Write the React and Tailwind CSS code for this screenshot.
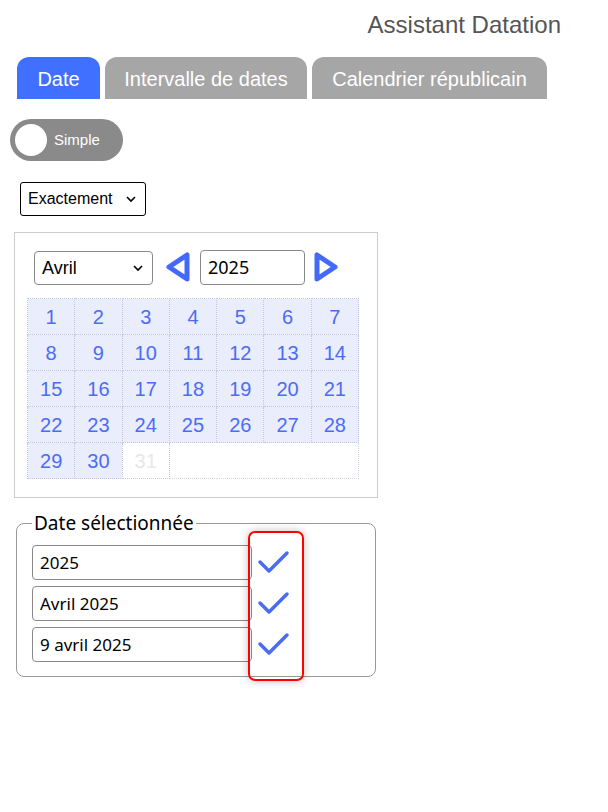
import React, { useState } from 'react';

const months = ['Janvier', 'Février', 'Mars', 'Avril', 'Mai', 'Juin', 'Juillet', 'Août', 'Septembre', 'Octobre', 'Novembre', 'Décembre'];

const Triangle = ({ dir }) => (
  <svg width="28" height="32" viewBox="0 0 28 32" className="shrink-0">
    <polygon
      points={dir === 'left' ? '22,4 22,28 4,16' : '6,4 6,28 24,16'}
      fill="none"
      stroke="#4369fb"
      strokeWidth="5"
      strokeLinejoin="round"
    />
  </svg>
);

const Check = () => (
  <svg width="34" height="30" viewBox="0 0 34 30" className="shrink-0">
    <polyline points="3,14 12,23 30,5" fill="none" stroke="#4a6cf2" strokeWidth="3.5" strokeLinecap="round" strokeLinejoin="round" />
  </svg>
);

const Calendar = () => {
  const rows = [];
  for (let r = 0; r < 4; r++) {
    rows.push([1, 2, 3, 4, 5, 6, 7].map((d) => d + r * 7));
  }
  const cell = 'w-[47px] h-9 border border-dotted border-[#c4c6dc] text-center align-middle';
  return (
    <table className="w-[332px] border-collapse ml-[12px] mt-[13px] font-['Liberation_Sans',sans-serif] text-[20px] text-[#4b6cf6]">
      <tbody>
        {rows.map((row, i) => (
          <tr key={i}>
            {row.map((d) => (
              <td key={d} className={`${cell} bg-[#eaedfc]`}>{d}</td>
            ))}
          </tr>
        ))}
        <tr>
          <td className={`${cell} bg-[#eaedfc]`}>29</td>
          <td className={`${cell} bg-[#eaedfc]`}>30</td>
          <td className={`${cell} text-[#e8e8e8]`}>31</td>
          <td colSpan={4} className="h-9 border border-dotted border-[#d4d6e6]"></td>
        </tr>
      </tbody>
    </table>
  );
};

export default function App() {
  const [tab, setTab] = useState(0);
  const tabs = [
    { label: 'Date', w: 'w-[83px]' },
    { label: 'Intervalle de dates', w: 'w-[202px]' },
    { label: 'Calendrier républicain', w: 'w-[235px]' },
  ];

  return (
    <div className="w-[608px] h-[812px] bg-white font-['Liberation_Sans',Arial,sans-serif] relative">
      <div className="flex justify-end pr-[47px] pt-[11px] text-[24px] text-[#555] leading-[28px]">Assistant Datation</div>

      <div className="flex gap-[5px] pl-[17px] mt-[18px]">
        {tabs.map((t, i) => (
          <button
            key={t.label}
            onClick={() => setTab(i)}
            className={`${t.w} h-[42px] rounded-t-[12px] text-[20px] text-white pt-[2px] ${i === tab ? 'bg-[#4070ff]' : 'bg-[#a6a6a6]'}`}
          >
            {t.label}
          </button>
        ))}
      </div>

      <div className="ml-[10px] mt-[20px] w-[113px] h-[42px] rounded-full bg-[#8a8a8a] flex items-center pl-[5px]">
        <div className="w-8 h-8 rounded-full bg-white" />
        <span className="ml-[7px] text-[15px] text-white">Simple</span>
      </div>

      <div className="ml-[20px] mt-[21px] w-[126px] h-[34px] border border-black rounded-[3px] flex items-center justify-between pl-[7px] pr-[9px] text-[16px] text-black">
        <span>Exactement</span>
        <svg width="10" height="7" viewBox="0 0 10 7"><polyline points="1,1 5,5 9,1" fill="none" stroke="#000" strokeWidth="1.6" /></svg>
      </div>

      <div className="ml-[14px] mt-[16px] w-[364px] h-[266px] border border-[#ccc]">
        <div className="flex items-center mt-[16px] ml-[19px]">
          <div className="w-[119px] h-[34px] border border-[#888] rounded-[4px] flex items-center justify-between pl-[7px] pr-[9px] text-[18px] text-black mt-[2px]">
            <span>{months[3]}</span>
            <svg width="10" height="7" viewBox="0 0 10 7"><polyline points="1,1 5,5 9,1" fill="none" stroke="#000" strokeWidth="1.6" /></svg>
          </div>
          <div className="ml-[12px]"><Triangle dir="left" /></div>
          <div className="ml-[7px] w-[105px] h-[35px] border border-[#888] rounded-[4px] flex items-center pl-[7px] text-[18px] text-black font-['Noto_Sans',sans-serif]">2025</div>
          <div className="ml-[6px]"><Triangle dir="right" /></div>
        </div>
        <Calendar />
      </div>

      <fieldset className="ml-[16px] mt-[13px] w-[360px] h-[166px] border border-[#999] rounded-[8px] pl-[15px] pr-0 pt-[10px]">
        <legend className="ml-[0px] px-[2px] text-[19px] text-black font-['Noto_Sans',sans-serif] leading-[24px]">Date sélectionnée</legend>
        {['2025', 'Avril 2025', '9 avril 2025'].map((v) => (
          <div key={v} className="flex items-center mb-[6px]">
            <div className="w-[220px] h-[35px] border border-[#888] rounded-[4px] flex items-center pl-[7px] text-[17px] text-black font-['Noto_Sans',sans-serif]">{v}</div>
            <div className="ml-[5px]"><Check /></div>
          </div>
        ))}
      </fieldset>

      <div className="absolute left-[248px] top-[531px] w-[56px] h-[150px] border-2 border-[#f00] rounded-[7px] shadow-[0_0_8px_rgba(0,0,0,0.25)] pointer-events-none" />
    </div>
  );
}
